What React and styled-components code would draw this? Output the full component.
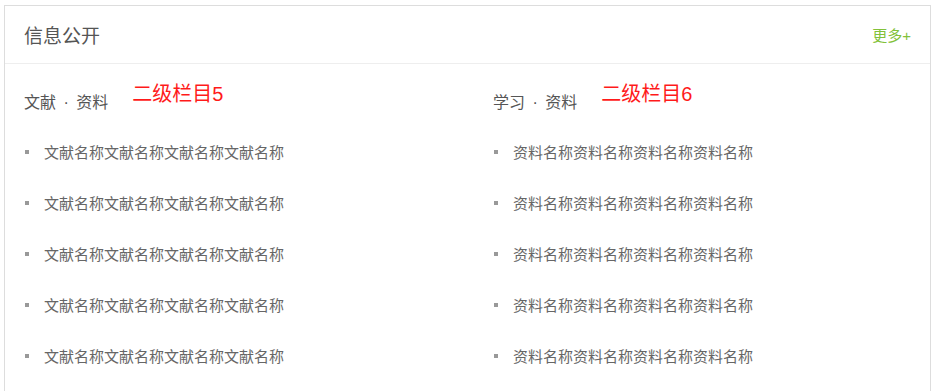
import styled, { createGlobalStyle } from "styled-components";

const GlobalStyle = createGlobalStyle`
  body {
    margin: 0;
    background: #fff;
    font-family: "Liberation Sans", "Noto Sans CJK SC", sans-serif;
  }
`;

const columns = [
  {
    id: "wx",
    title: "文献 · 资料",
    tag: "二级栏目5",
    items: Array(5).fill("文献名称文献名称文献名称文献名称"),
  },
  {
    id: "xx",
    title: "学习 · 资料",
    tag: "二级栏目6",
    items: Array(5).fill("资料名称资料名称资料名称资料名称"),
  },
];

export default function App() {
  return (
    <>
      <GlobalStyle />
      <Page>
        <Panel>
          <PanelHead>
            <PanelTitle>信息公开</PanelTitle>
            <More href="#">更多+</More>
          </PanelHead>
          <PanelBody>
            {columns.map((col) => (
              <Column key={col.id}>
                <ColumnHead>
                  <ColumnTitle>{col.title}</ColumnTitle>
                  <Tag>{col.tag}</Tag>
                </ColumnHead>
                <List>
                  {col.items.map((text, i) => (
                    <Item key={i}>{text}</Item>
                  ))}
                </List>
              </Column>
            ))}
          </PanelBody>
        </Panel>
      </Page>
    </>
  );
}

const Page = styled.div`
  padding: 5px 0 0 4px;
  height: 386px;
  overflow: hidden;
`;

const Panel = styled.section`
  width: 925px;
  border: 1px solid #ddd;
  border-bottom: none;
  height: 420px;
`;

const PanelHead = styled.div`
  display: flex;
  justify-content: space-between;
  align-items: center;
  height: 57px;
  padding: 0 19px;
  border-bottom: 1px solid #eee;
`;

const PanelTitle = styled.h2`
  margin: 0;
  font-size: 19px;
  font-weight: normal;
  color: #555;
`;

const More = styled.a`
  font-size: 15px;
  color: #82c13a;
  text-decoration: none;
`;

const PanelBody = styled.div`
  display: grid;
  grid-template-columns: 469px 1fr;
  padding: 0 19px;
`;

const Column = styled.div``;

const ColumnHead = styled.div`
  display: flex;
  align-items: flex-start;
  gap: 24px;
  padding-top: 20px;
  height: 42px;
`;

const ColumnTitle = styled.h3`
  margin: 0;
  padding-top: 5px;
  font-size: 16px;
  font-weight: normal;
  word-spacing: 3px;
  color: #555;
`;

const Tag = styled.span`
  font-size: 20px;
  line-height: 20px;
  color: #ff1a1a;
`;

const List = styled.ul`
  list-style: none;
  margin: 0;
  padding: 0;
`;

const Item = styled.li`
  display: flex;
  align-items: center;
  height: 51px;
  padding-left: 20px;
  position: relative;
  font-size: 15px;
  color: #666;

  &::before {
    content: "";
    position: absolute;
    left: 1px;
    top: 50%;
    width: 4px;
    height: 4px;
    margin-top: -2px;
    background: #999;
  }
`;
